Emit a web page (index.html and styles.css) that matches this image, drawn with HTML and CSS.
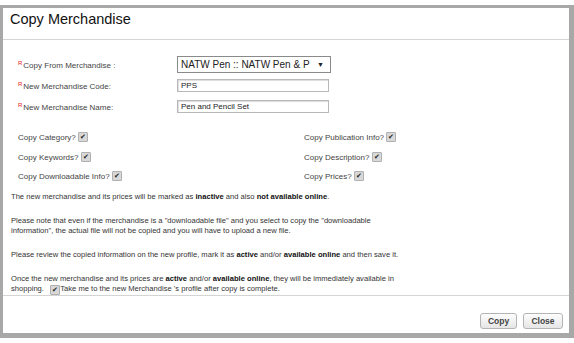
FILE: index.html
```html
<!DOCTYPE html>
<html>
<head>
<meta charset="utf-8">
<title>Copy Merchandise</title>
<link rel="stylesheet" href="styles.css">
</head>
<body>
<div class="dialog">
  <div class="dialog-title">Copy Merchandise</div>

  <div class="dialog-body">
    <div class="form-row row-select">
      <label class="form-label"><span class="req">R</span>Copy From Merchandise :</label>
      <div class="select-box">
        <span>NATW Pen :: NATW Pen &amp; P</span>
        <span class="arrow">&#9660;</span>
      </div>
    </div>
    <div class="form-row row-code">
      <label class="form-label"><span class="req">R</span>New Merchandise Code:</label>
      <div class="text-box">PPS</div>
    </div>
    <div class="form-row">
      <label class="form-label"><span class="req">R</span>New Merchandise Name:</label>
      <div class="text-box">Pen and Pencil Set</div>
    </div>

    <div class="options">
      <div class="opt">Copy Category? <span class="chk">&#10004;</span></div>
      <div class="opt">Copy Publication Info? <span class="chk">&#10004;</span></div>
      <div class="opt">Copy Keywords? <span class="chk">&#10004;</span></div>
      <div class="opt">Copy Description? <span class="chk">&#10004;</span></div>
      <div class="opt">Copy Downloadable Info? <span class="chk">&#10004;</span></div>
      <div class="opt">Copy Prices? <span class="chk">&#10004;</span></div>
    </div>

    <p class="note first">The new merchandise and its prices will be marked as <b>inactive</b> and also <b>not available online</b>.</p>
    <p class="note">Please note that even if the merchandise is a "downloadable file" and you select to copy the "downloadable<br>information", the actual file will not be copied and you will have to upload a new file.</p>
    <p class="note">Please review the copied information on the new profile, mark it as <b>active</b> and/or <b>available online</b> and then save it.</p>
    <p class="note">Once the new merchandise and its prices are <b>active</b> and/or <b>available online</b>, they will be immediately available in<br>shopping. &nbsp; <span class="chk small">&#10004;</span>Take me to the new Merchandise 's profile after copy is complete.</p>
  </div>

  <div class="dialog-footer">
    <button class="btn btn-copy">Copy</button>
    <button class="btn">Close</button>
  </div>
</div>
</body>
</html>
```

FILE: styles.css
```css
body {
  margin: 0;
  padding-top: 5px;
  background-color: white;
  font-family: "Liberation Sans", Arial, sans-serif;
  color: #333;
}

.dialog {
  height: 333px;
  border-style: solid;
  border-color: #a8a8a8;
  border-width: 3px 5px 5px 3px;
  background-color: white;
  display: flex;
  flex-direction: column;
  box-sizing: border-box;
  box-shadow: 0 5px 0 #dcdcdc;
}

.dialog-title {
  height: 34px;
  padding: 3px 0 0 7px;
  font-size: 14.5px;
  color: #111;
  border-bottom: 1px solid #d4d4d4;
  box-sizing: border-box;
}

.dialog-body {
  flex: 1;
  padding: 16px 0 0 7px;
  font-size: 8px;
}

.form-row {
  display: flex;
  align-items: center;
  margin-bottom: 8px;
}

.row-select {
  margin-bottom: 6px;
}

.form-label {
  width: 159px;
  padding-left: 8px;
  color: #444;
}

.req {
  color: #e02020;
  font-size: 6px;
  vertical-align: 3px;
  margin-right: 1px;
}

.select-box {
  width: 154px;
  height: 17px;
  border: 1px solid #8a8a8a;
  box-sizing: border-box;
  display: flex;
  align-items: center;
  justify-content: space-between;
  padding: 0 6px 0 3px;
  font-size: 10px;
  color: #222;
  white-space: nowrap;
  overflow: hidden;
}

.select-box .arrow {
  font-size: 7px;
}

.text-box {
  width: 152px;
  height: 13px;
  border: 1px solid #b8b8b8;
  box-shadow: inset 1px 1px 1px #ddd;
  box-sizing: border-box;
  padding: 0 3px;
  line-height: 11px;
  color: #222;
}

.options {
  display: grid;
  grid-template-columns: 286px 1fr;
  row-gap: 9.5px;
  padding: 11px 0 0 8px;
  color: #444;
}

.opt {
  height: 10px;
  line-height: 10px;
}

.chk {
  display: inline-block;
  width: 8px;
  height: 8px;
  background-color: #d8d8d8;
  border: 1px solid #b0b0b0;
  border-radius: 1px;
  font-size: 7px;
  line-height: 8px;
  text-align: center;
  color: #222;
  vertical-align: 1px;
}

.chk.small {
  vertical-align: -1px;
  margin-top: -2px;
}

.note {
  margin: 14px 0 0 1px;
  font-size: 7.6px;
  line-height: 10px;
  color: #333;
}

.note.first {
  margin-top: 11px;
}

.note b {
  color: #111;
}

.dialog-footer {
  height: 40px;
  border-top: 1px solid #d4d4d4;
  display: flex;
  justify-content: flex-end;
  align-items: flex-end;
  gap: 6px;
  padding: 0 6px 4px 0;
  box-sizing: border-box;
}

.btn {
  width: 40px;
  height: 16px;
  padding: 0;
  font-family: "Liberation Sans", Arial, sans-serif;
  font-size: 8.5px;
  font-weight: bold;
  color: #444;
  background: linear-gradient(#fdfdfd, #e6e6e6);
  border: 1px solid #b4b4b4;
  border-radius: 3px;
}

.btn-copy {
  width: 37px;
}
```
